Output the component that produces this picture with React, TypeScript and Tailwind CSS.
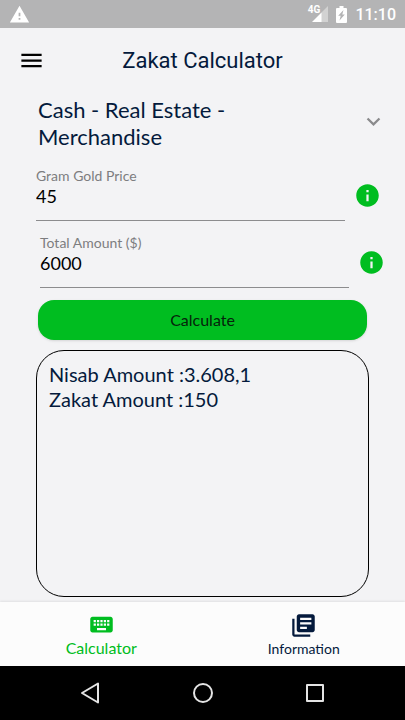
import { useState } from 'react';
import type { FormEvent } from 'react';
import {
  MdExpandMore,
  MdInfo,
  MdKeyboard,
  MdLibraryBooks,
  MdMenu,
  MdWarning,
} from 'react-icons/md';

const categories = [
  'Cash - Real Estate - Merchandise',
  'Gold - Silver',
  'Agricultural Products',
];

const NISAB_GRAMS = 80.18;
const ZAKAT_RATE = 0.025;

const calculate = (goldPrice: string, total: string) => {
  const nisab = Number(goldPrice) * NISAB_GRAMS;
  const amount = Number(total);
  return { nisab, zakat: amount >= nisab ? amount * ZAKAT_RATE : 0 };
};

const formatAmount = (value: number) =>
  value.toLocaleString('de-DE', { maximumFractionDigits: 2 });

function StatusBar() {
  return (
    <div className="flex h-7 items-center bg-[#b4b4b5] px-[9px] text-white">
      <MdWarning size={21} />
      <div className="ml-auto flex items-center">
        <span className="mb-2 font-[Roboto] text-[10px] leading-none font-bold">
          4G
        </span>
        {/* Signal strength */}
        <svg
          viewBox="0 0 16 16"
          className="-ml-2 h-4 w-4"
          fill="currentColor"
          aria-hidden="true"
        >
          <path d="M16 0v16H9V7z" opacity="0.4" />
          <path d="M9.500 6.500V16H0z" />
        </svg>
        {/* Battery */}
        <svg
          viewBox="0 0 11 17"
          className="ml-2 h-[17px] w-[11px]"
          fill="currentColor"
          aria-hidden="true"
        >
          <path
            fillRule="evenodd"
            d="M3.500 0h4v2H10a1 1 0 0 1 1 1v13a1 1 0 0 1-1 1H1a1 1 0 0 1-1-1V3a1 1 0 0 1 1-1h2.500zM7.500 4 2.200 9.800h2.500L3.500 14.500l5.300-6H6.300z"
          />
        </svg>
        <span className="ml-2 pt-px font-[Roboto] text-base leading-7 font-medium">
          11:10
        </span>
      </div>
    </div>
  );
}

interface AmountFieldProps {
  id: string;
  label: string;
  value: string;
  className: string;
  onChange: (value: string) => void;
}

function AmountField({ id, label, value, className, onChange }: AmountFieldProps) {
  return (
    <div className={`flex items-center ${className}`}>
      <div className="flex-1 border-b border-[#8c8c8e]">
        <label
          htmlFor={id}
          className="block text-sm leading-5 text-[#7d7d7f]"
        >
          {label}
        </label>
        <input
          id={id}
          type="text"
          inputMode="decimal"
          value={value}
          onChange={(e) => onChange(e.target.value)}
          className="mb-[14px] block h-5 w-full bg-transparent text-lg leading-5 text-black outline-none"
        />
      </div>
      <button
        type="button"
        aria-label={`About ${label}`}
        className="mt-1 ml-[9px] text-[#00bd20]"
      >
        <MdInfo size={27} />
      </button>
    </div>
  );
}

export default function App() {
  const [category, setCategory] = useState(categories[0]);
  const [goldPrice, setGoldPrice] = useState('45');
  const [total, setTotal] = useState('6000');
  const [result, setResult] = useState(() => calculate('45', '6000'));

  const handleSubmit = (e: FormEvent) => {
    e.preventDefault();
    setResult(calculate(goldPrice, total));
  };

  return (
    <div className="flex min-h-screen flex-col bg-[#f3f3f5] font-[Lato,sans-serif] text-[#041a3c]">
      <StatusBar />

      <header className="grid h-16 grid-cols-[auto_1fr_auto] items-center px-[18px]">
        <button type="button" aria-label="Menu" className="text-black">
          <MdMenu size={27} />
        </button>
        <h1 className="text-center font-[Roboto] text-[22px]">
          Zakat Calculator
        </h1>
        <span className="w-[27px]" />
      </header>

      <main className="flex flex-1 flex-col">
        {/* The select covers the wrapped text, since its own text can't wrap */}
        <div className="relative mt-1 flex items-center pr-[18px] pl-[38px]">
          <span className="flex-1 pr-20 text-[22px] leading-[27px]">
            {category}
          </span>
          <MdExpandMore size={27} className="mb-1 text-[#8a8a8c]" />
          <select
            aria-label="Zakat category"
            value={category}
            onChange={(e) => setCategory(e.target.value)}
            className="absolute inset-0 w-full cursor-pointer opacity-0"
          >
            {categories.map((name) => (
              <option key={name}>{name}</option>
            ))}
          </select>
        </div>

        <form onSubmit={handleSubmit}>
          <AmountField
            id="gold-price"
            label="Gram Gold Price"
            value={goldPrice}
            onChange={setGoldPrice}
            className="mt-4 pr-6 pl-9"
          />
          <AmountField
            id="total-amount"
            label="Total Amount ($)"
            value={total}
            onChange={setTotal}
            className="mt-3 pr-5 pl-10"
          />
          <div className="px-[38px] pt-3">
            <button
              type="submit"
              className="h-10 w-full rounded-2xl bg-[#00bd20] text-base text-[#06230b] shadow"
            >
              Calculate
            </button>
          </div>
        </form>

        {/* Result */}
        <output className="mx-9 mt-[10px] mb-[5px] block flex-1 rounded-[28px] border border-black px-3 py-[11px] text-xl leading-[25px]">
          <p>Nisab Amount :{formatAmount(result.nisab)}</p>
          <p>Zakat Amount :{formatAmount(result.zakat)}</p>
        </output>
      </main>

      <nav className="grid h-16 grid-cols-2 bg-[#fcfcfc] shadow-[0_-1px_2px_rgba(0,0,0,0.08)]">
        <a
          href="#calculator"
          aria-current="page"
          className="flex flex-col items-center justify-center text-base leading-5 text-[#00bd20]"
        >
          <MdKeyboard size={27} />
          Calculator
        </a>
        <a
          href="#information"
          className="flex flex-col items-center justify-center pt-[3px] text-sm leading-5"
        >
          <MdLibraryBooks size={27} />
          Information
        </a>
      </nav>

      {/* Android navigation */}
      <div className="flex h-[54px] items-center justify-center gap-[84px] bg-black text-[#e4e4e4]">
        <button type="button" aria-label="Back">
          <svg viewBox="0 0 28 28" className="h-7 w-7" fill="none" stroke="currentColor" strokeWidth="2" strokeLinejoin="round">
            <path d="M21 4.500v19L5 14z" />
          </svg>
        </button>
        <button type="button" aria-label="Home">
          <svg viewBox="0 0 28 28" className="h-7 w-7" fill="none" stroke="currentColor" strokeWidth="2">
            <circle cx="14" cy="14" r="9" />
          </svg>
        </button>
        <button type="button" aria-label="Overview">
          <svg viewBox="0 0 28 28" className="h-7 w-7" fill="none" stroke="currentColor" strokeWidth="2" strokeLinejoin="round">
            <path d="M6 6h16v16H6z" />
          </svg>
        </button>
      </div>
    </div>
  );
}
